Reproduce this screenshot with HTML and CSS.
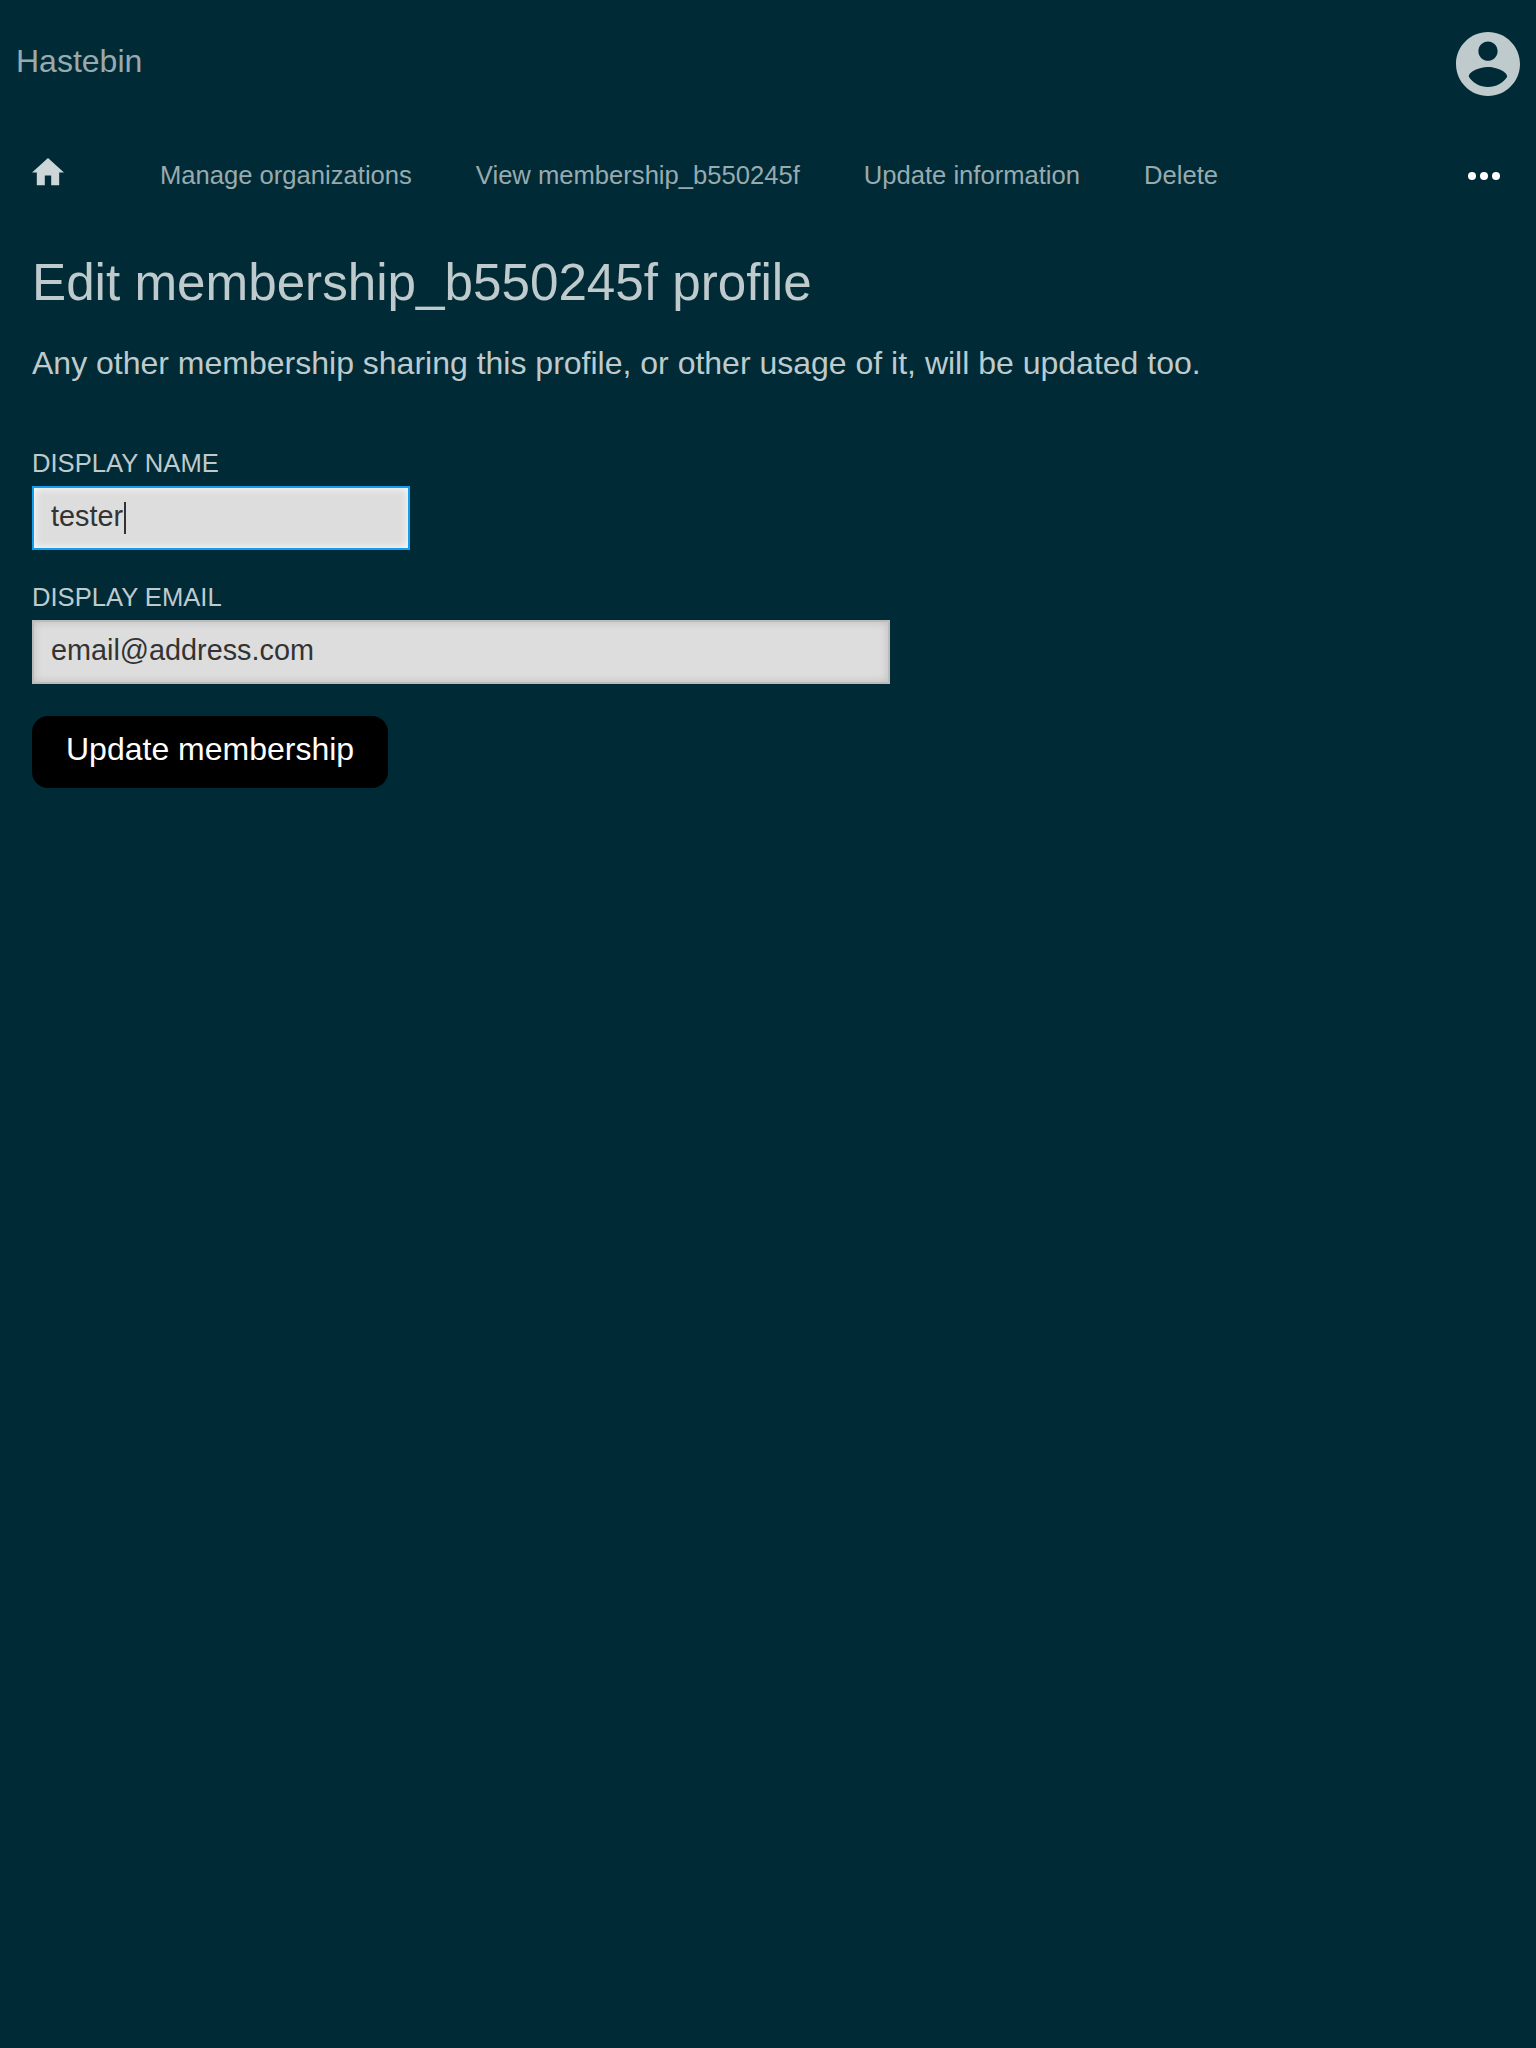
FILE: index.html
```html
<!DOCTYPE html>
<html lang="en">
<head>
<meta charset="utf-8">
<title>Edit membership_b550245f profile</title>
<link rel="stylesheet" href="styles.css">
</head>
<body>
<header class="masthead">
  <a class="brand">Hastebin</a>
  <svg class="account" viewBox="2 2 20 20"><path d="M12 2C6.48 2 2 6.48 2 12s4.48 10 10 10 10-4.48 10-10S17.52 2 12 2zm0 3c1.66 0 3 1.34 3 3s-1.34 3-3 3-3-1.34-3-3 1.34-3 3-3zm0 14.2c-2.5 0-4.71-1.28-6-3.22.03-1.99 4-3.08 6-3.08 1.99 0 5.97 1.09 6 3.08-1.29 1.94-3.5 3.22-6 3.22z"/></svg>
</header>
<nav class="nav">
  <svg class="home" viewBox="2 3 20 17"><path d="M10 20v-6h4v6h5v-8h3L12 3 2 12h3v8z"/></svg>
  <div class="links">
    <a>Manage organizations</a>
    <a>View membership_b550245f</a>
    <a>Update information</a>
    <a>Delete</a>
  </div>
  <svg class="more" viewBox="4 10 16 4"><circle cx="6" cy="12" r="2"/><circle cx="12" cy="12" r="2"/><circle cx="18" cy="12" r="2"/></svg>
</nav>
<main class="content">
  <h1>Edit membership_b550245f profile</h1>
  <p class="note">Any other membership sharing this profile, or other usage of it, will be updated too.</p>
  <form>
    <div class="group">
      <label>DISPLAY NAME</label>
      <div class="field name focused"><span>tester</span><i class="caret"></i></div>
    </div>
    <div class="group">
      <label>DISPLAY EMAIL</label>
      <div class="field email"><span>email@address.com</span></div>
    </div>
    <button type="button">Update membership</button>
  </form>
</main>
</body>
</html>
```
FILE: styles.css
```css
* { box-sizing: border-box; }

body {
  margin: 0;
  min-height: 2048px;
  background: #002b36;
  color: #bfcacd;
  font: 32px/36px "Liberation Sans", Arial, sans-serif;
}

svg { display: block; flex: none; fill: currentColor; }

.masthead {
  display: flex;
  justify-content: space-between;
  align-items: flex-start;
  height: 128px;
  padding: 32px 16px;
}

.brand { padding-top: 11px; color: #99aaaf; }
.account { width: 64px; height: 64px; }

.nav {
  display: flex;
  align-items: flex-start;
  height: 96px;
  padding: 30px 36px 0 32px;
}

.home { width: 32px; height: 27.2px; margin-top: .4px; color: #ccd5d7; }

.links {
  display: flex;
  flex: 1;
  gap: 64px;
  margin-left: 96px;
  padding-top: 3px;
  color: #99aaaf;
  font-size: 25.6px;
  line-height: 28px;
}

.more { width: 32px; height: 8px; margin-top: 14px; color: #fff; }

.content { padding: 30px 32px; }

h1 { margin: 0; font-size: 51.2px; line-height: 57px; font-weight: 400; }

.note { margin: 34px 0 68px; }

.group { margin-bottom: 33px; }

label {
  display: block;
  margin-bottom: 9px;
  font-size: 25.6px;
  line-height: 28px;
}

.field {
  display: flex;
  height: 64px;
  padding: 12px 17px;
  border: 2px solid #bbb;
  background: #ddd;
  box-shadow: inset 0 0 8px rgba(0, 0, 0, .15);
  color: #333;
  font-size: 28.8px;
  line-height: 32px;
}

.name { width: 378px; }
.email { width: 858px; }

.focused { border-color: #109fef; box-shadow: inset 0 0 8px #fff; }

.caret { width: 2px; height: 32px; margin: 2px 0 0 1px; background: #333; }

button {
  display: block;
  height: 72px;
  margin-top: -1px;
  padding: 15px 34px 21px;
  border: 0;
  border-radius: 16px;
  background: #000;
  color: #fff;
  font: inherit;
}
```
